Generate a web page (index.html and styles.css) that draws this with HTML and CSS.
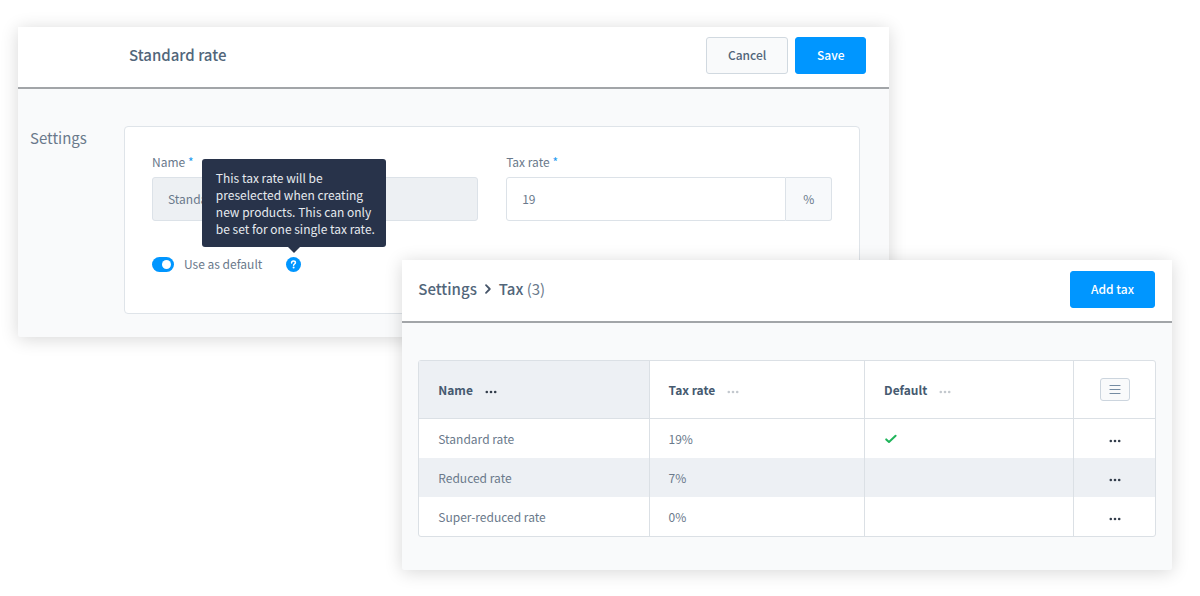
FILE: index.html
```html
<!DOCTYPE html>
<html lang="en">
<head>
    <meta charset="UTF-8">
    <meta name="viewport" content="width=device-width, initial-scale=1.0">
    <title>Tax settings</title>
    <link rel="stylesheet" href="styles.css">
</head>
<body>
    <!-- icons -->
    <svg width="0" height="0" class="sprite" aria-hidden="true">
        <symbol id="dots" viewBox="0 0 12 4">
            <circle cx="1.8" cy="2" r="1.3"/>
            <circle cx="6" cy="2" r="1.3"/>
            <circle cx="10.2" cy="2" r="1.3"/>
        </symbol>
    </svg>

    <main class="showcase">
        <section class="panel panel-detail">
            <header class="panel-header">
                <h1 class="detail-title">Standard rate</h1>
                <div class="actions">
                    <button type="button" class="btn">Cancel</button>
                    <button type="submit" form="taxForm" class="btn btn-primary">Save</button>
                </div>
            </header>
            <div class="detail-body">
                <h2>Settings</h2>
                <form class="card" id="taxForm">
                    <div class="fields">
                        <div class="field">
                            <label for="name">Name <span class="required">*</span></label>
                            <input type="text" id="name" class="text-input" value="Standard rate" disabled>
                        </div>
                        <div class="field">
                            <label for="rate">Tax rate <span class="required">*</span></label>
                            <div class="input-group">
                                <input type="text" id="rate" class="text-input" value="19">
                                <span class="suffix">%</span>
                            </div>
                        </div>
                    </div>
                    <div class="switch-row">
                        <input type="checkbox" id="default" class="switch" checked>
                        <label for="default">Use as default</label>
                        <span class="help">
                            <svg viewBox="0 0 15 15" width="15" height="15" aria-hidden="true">
                                <circle cx="7.5" cy="7.5" r="7.5" fill="#0096ff"/>
                                <path d="M5.6 5.9c0-1.1.8-1.8 1.9-1.8s1.9.7 1.9 1.6c0 1.3-1.8 1.3-1.8 2.6" fill="none" stroke="#fff" stroke-width="1.5" stroke-linecap="round"/>
                                <circle cx="7.6" cy="10.6" r="1" fill="#fff"/>
                            </svg>
                            <span class="tooltip" role="tooltip">This tax rate will be preselected when creating new products. This can only be set for one single tax rate.</span>
                        </span>
                    </div>
                </form>
            </div>
        </section>

        <section class="panel panel-list">
            <header class="panel-header">
                <nav class="breadcrumb" aria-label="Breadcrumb">
                    <a href="#settings">Settings</a>
                    <svg viewBox="0 0 8 12" width="8" height="12" aria-hidden="true">
                        <path d="M2 2.2 5.8 6 2 9.8" fill="none" stroke="#465569" stroke-width="1.8" stroke-linecap="round" stroke-linejoin="round"/>
                    </svg>
                    <span class="current"><strong>Tax</strong> (3)</span>
                </nav>
                <button type="button" class="btn btn-primary">Add tax</button>
            </header>
            <div class="list-body">
                <table class="grid">
                    <thead>
                        <tr>
                            <th class="col-name">Name <button type="button" class="icon-btn" aria-label="Name options"><svg><use href="#dots"/></svg></button></th>
                            <th class="col-rate">Tax rate <button type="button" class="icon-btn muted" aria-label="Tax rate options"><svg><use href="#dots"/></svg></button></th>
                            <th class="col-default">Default <button type="button" class="icon-btn muted" aria-label="Default options"><svg><use href="#dots"/></svg></button></th>
                            <th class="col-actions">
                                <button type="button" class="list-settings" aria-label="List settings">
                                    <svg viewBox="0 0 12 11" width="12" height="11" aria-hidden="true">
                                        <path d="M1 1.5h10M1 5.5h10M1 9.5h10" stroke="#758ca3" stroke-width="1.2" stroke-linecap="round"/>
                                    </svg>
                                </button>
                            </th>
                        </tr>
                    </thead>
                    <tbody>
                        <tr>
                            <td>Standard rate</td>
                            <td>19%</td>
                            <td>
                                <svg class="check" viewBox="0 0 14 10" width="14" height="10" role="img" aria-label="Yes">
                                    <path d="M2.2 5.4 5 8l6.6-6.2" fill="none" stroke="#1fb45a" stroke-width="2" stroke-linecap="round" stroke-linejoin="round"/>
                                </svg>
                            </td>
                            <td class="col-actions"><button type="button" class="icon-btn" aria-label="Actions"><svg><use href="#dots"/></svg></button></td>
                        </tr>
                        <tr>
                            <td>Reduced rate</td>
                            <td>7%</td>
                            <td></td>
                            <td class="col-actions"><button type="button" class="icon-btn" aria-label="Actions"><svg><use href="#dots"/></svg></button></td>
                        </tr>
                        <tr>
                            <td>Super-reduced rate</td>
                            <td>0%</td>
                            <td></td>
                            <td class="col-actions"><button type="button" class="icon-btn" aria-label="Actions"><svg><use href="#dots"/></svg></button></td>
                        </tr>
                    </tbody>
                </table>
            </div>
        </section>
    </main>
</body>
</html>
```
FILE: styles.css
```css
* {
    box-sizing: border-box;
}
body {
    margin: 0;
    background: #fff;
    color: #6a798b;
    font-family: "Noto Sans CJK JP", "Noto Sans", sans-serif;
    font-size: 12px;
    line-height: 17px;
}
button, input {
    font: inherit;
    color: inherit;
}
svg {
    display: block;
}
.sprite {
    position: absolute;
}
.showcase {
    padding: 27px 28px 26px 18px;
}
.panel {
    border-radius: 2px;
    background: #f9fafb;
    box-shadow: 0 2px 18px rgba(0,0,0,0.16);
}
.panel-detail {
    margin-right: 24.5%;
}
.panel-list {
    position: relative;
    margin-top: -77px;
    margin-left: 33.3%;
}
.panel-header {
    display: flex;
    align-items: center;
    justify-content: space-between;
    height: 63px;
    padding: 0 17px 3px 16px;
    background: #fff;
    border-bottom: 2px solid #a2a5a8;
}
.panel-detail .panel-header {
    height: 62px;
    padding: 0 23px 4px 111px;
}
.detail-title {
    margin: 0;
    font-size: 15px;
    font-weight: 500;
    line-height: 24px;
    color: #52667a;
}
.actions {
    display: flex;
    gap: 7px;
}
.btn {
    height: 37px;
    padding: 0 21px 2px;
    border: 1px solid #d1d9e0;
    border-radius: 3px;
    background: #f9fafb;
    color: #52667a;
    font-weight: 500;
    cursor: pointer;
}
.btn-primary {
    min-width: 71px;
    padding: 0 20px 2px;
    border-color: #0096ff;
    background: #0096ff;
    color: #fff;
}

/* detail form */
.detail-body {
    display: grid;
    grid-template-columns: 94px 1fr;
    padding: 37px 29px 23px 12px;
}
.detail-body h2 {
    margin: 0;
    font-size: 15px;
    font-weight: 400;
    line-height: 24px;
}
.card {
    padding: 26px 27px 39px;
    border: 1px solid #dfe4e9;
    border-radius: 4px;
    background: #fff;
}
.fields {
    display: grid;
    grid-template-columns: 1fr 1fr;
    gap: 28px;
}
.field label {
    display: block;
    margin-bottom: 7px;
}
.required {
    color: #1f9cf0;
}
.text-input {
    width: 100%;
    height: 44px;
    padding: 0 15px 2px;
    border: 1px solid #dce2e8;
    border-radius: 3px;
    background: #fff;
}
.text-input:disabled {
    background: #edf0f3;
}
.input-group {
    display: flex;
}
.input-group .text-input {
    border-radius: 3px 0 0 3px;
}
.suffix {
    display: flex;
    flex: none;
    align-items: center;
    justify-content: center;
    width: 46px;
    padding-bottom: 2px;
    border: 1px solid #dce2e8;
    border-left: 0;
    border-radius: 0 3px 3px 0;
    background: #f7f9fb;
}
.switch-row {
    display: flex;
    align-items: center;
    margin-top: 34px;
}
.switch-row label {
    padding-bottom: 2px;
}
.switch {
    appearance: none;
    width: 22px;
    height: 15px;
    margin: 0 10px 0 0;
    padding: 3px;
    border-radius: 8px;
    background: #0096ff;
}
.switch::before {
    content: "";
    display: block;
    width: 9px;
    height: 9px;
    margin-left: auto;
    border-radius: 50%;
    background: #fff;
}
.help {
    position: relative;
    margin-left: 24px;
}
.tooltip {
    position: absolute;
    bottom: 25px;
    left: 50%;
    width: 184px;
    padding: 10px 8px 10px 14px;
    border-radius: 3px;
    background: #28334a;
    color: #e6eaef;
    transform: translateX(-50%);
}
.tooltip::after {
    content: "";
    position: absolute;
    top: 100%;
    left: 50%;
    margin-left: -6px;
    border: 6px solid transparent;
    border-top-color: #28334a;
    border-bottom: 0;
}

/* tax list */
.breadcrumb {
    display: flex;
    align-items: center;
    gap: 7px;
    font-size: 15px;
    line-height: 24px;
}
.breadcrumb a {
    color: #52667a;
    font-weight: 500;
    text-decoration: none;
}
.breadcrumb strong {
    color: #52667a;
    font-weight: 500;
}
.list-body {
    padding: 37px 16px 33px;
}
.grid {
    width: 100%;
    table-layout: fixed;
    border: 1px solid #dbe0e5;
    border-radius: 3px;
    border-spacing: 0;
    background: #fff;
}
.grid th,
.grid td {
    height: 39px;
    padding: 0 19px;
    border-right: 1px solid #dbe0e5;
    text-align: left;
}
.grid th:last-child,
.grid td:last-child {
    border-right: 0;
}
.grid th {
    height: 58px;
    border-bottom: 1px solid #dbe0e5;
    color: #465a70;
    font-weight: 700;
}
.grid tbody tr:nth-child(even) {
    background: #edf0f4;
}
.col-name {
    width: 31.3%;
    background: #edf0f4;
}
.col-rate {
    width: 29.3%;
}
.col-default {
    width: 28.4%;
}
.grid .col-actions {
    padding: 0;
    text-align: center;
}
.icon-btn {
    padding: 0;
    border: 0;
    background: none;
    color: #333d4b;
    vertical-align: middle;
    cursor: pointer;
}
.icon-btn svg {
    width: 12px;
    height: 4px;
    fill: currentColor;
}
.icon-btn.muted {
    color: #c3c8ce;
}
th .icon-btn {
    margin-left: 9px;
}
.list-settings {
    display: inline-flex;
    align-items: center;
    justify-content: center;
    width: 30px;
    height: 23px;
    padding: 0;
    border: 1px solid #ccd5de;
    border-radius: 3px;
    background: #f9fafb;
    vertical-align: middle;
    cursor: pointer;
}
```
